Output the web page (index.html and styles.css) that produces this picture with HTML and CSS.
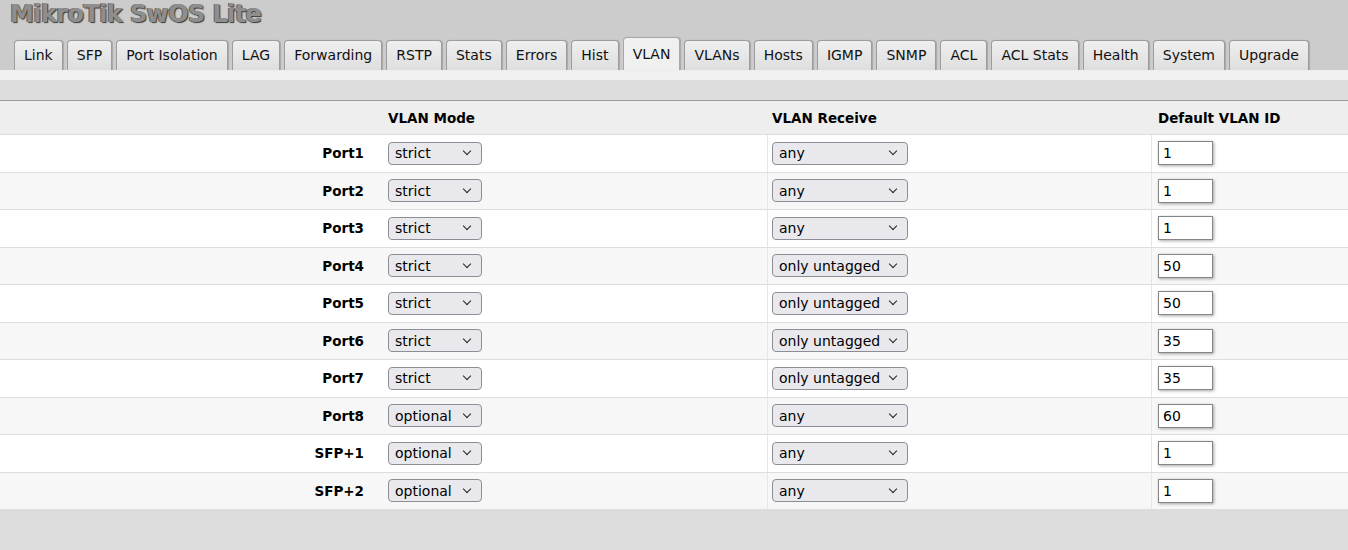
FILE: index.html
```html
<!DOCTYPE html>
<html>
<head>
<meta charset="utf-8">
<title>MikroTik SwOS Lite</title>
<link rel="stylesheet" href="styles.css">
</head>
<body>
<header class="title">MikroTik SwOS Lite</header>
<nav class="tabs">
  <a class="tab">Link</a>
  <a class="tab">SFP</a>
  <a class="tab">Port Isolation</a>
  <a class="tab">LAG</a>
  <a class="tab">Forwarding</a>
  <a class="tab">RSTP</a>
  <a class="tab">Stats</a>
  <a class="tab">Errors</a>
  <a class="tab">Hist</a>
  <a class="tab active">VLAN</a>
  <a class="tab">VLANs</a>
  <a class="tab">Hosts</a>
  <a class="tab">IGMP</a>
  <a class="tab">SNMP</a>
  <a class="tab">ACL</a>
  <a class="tab">ACL Stats</a>
  <a class="tab">Health</a>
  <a class="tab">System</a>
  <a class="tab">Upgrade</a>
</nav>
<div class="strip"></div>
<div class="bar"></div>
<main class="grid">
  <div class="row head">
    <div class="c1"></div>
    <div class="c2">VLAN Mode</div>
    <div class="c3">VLAN Receive</div>
    <div class="c4">Default VLAN ID</div>
  </div>
  <div class="row">
    <div class="c1 lbl">Port1</div>
    <div class="c2"><span class="sel mode"><select><option selected>strict</option><option>optional</option><option>enabled</option><option>disabled</option></select></span></div>
    <div class="c3"><span class="sel recv"><select><option selected>any</option><option>only tagged</option><option>only untagged</option></select></span></div>
    <div class="c4"><input class="vid" type="text" value="1"></div>
  </div>
  <div class="row">
    <div class="c1 lbl">Port2</div>
    <div class="c2"><span class="sel mode"><select><option selected>strict</option><option>optional</option></select></span></div>
    <div class="c3"><span class="sel recv"><select><option selected>any</option><option>only untagged</option></select></span></div>
    <div class="c4"><input class="vid" type="text" value="1"></div>
  </div>
  <div class="row">
    <div class="c1 lbl">Port3</div>
    <div class="c2"><span class="sel mode"><select><option selected>strict</option><option>optional</option></select></span></div>
    <div class="c3"><span class="sel recv"><select><option selected>any</option><option>only untagged</option></select></span></div>
    <div class="c4"><input class="vid" type="text" value="1"></div>
  </div>
  <div class="row">
    <div class="c1 lbl">Port4</div>
    <div class="c2"><span class="sel mode"><select><option selected>strict</option><option>optional</option></select></span></div>
    <div class="c3"><span class="sel recv"><select><option>any</option><option selected>only untagged</option></select></span></div>
    <div class="c4"><input class="vid" type="text" value="50"></div>
  </div>
  <div class="row">
    <div class="c1 lbl">Port5</div>
    <div class="c2"><span class="sel mode"><select><option selected>strict</option><option>optional</option></select></span></div>
    <div class="c3"><span class="sel recv"><select><option>any</option><option selected>only untagged</option></select></span></div>
    <div class="c4"><input class="vid" type="text" value="50"></div>
  </div>
  <div class="row">
    <div class="c1 lbl">Port6</div>
    <div class="c2"><span class="sel mode"><select><option selected>strict</option><option>optional</option></select></span></div>
    <div class="c3"><span class="sel recv"><select><option>any</option><option selected>only untagged</option></select></span></div>
    <div class="c4"><input class="vid" type="text" value="35"></div>
  </div>
  <div class="row">
    <div class="c1 lbl">Port7</div>
    <div class="c2"><span class="sel mode"><select><option selected>strict</option><option>optional</option></select></span></div>
    <div class="c3"><span class="sel recv"><select><option>any</option><option selected>only untagged</option></select></span></div>
    <div class="c4"><input class="vid" type="text" value="35"></div>
  </div>
  <div class="row">
    <div class="c1 lbl">Port8</div>
    <div class="c2"><span class="sel mode"><select><option>strict</option><option selected>optional</option></select></span></div>
    <div class="c3"><span class="sel recv"><select><option selected>any</option><option>only untagged</option></select></span></div>
    <div class="c4"><input class="vid" type="text" value="60"></div>
  </div>
  <div class="row">
    <div class="c1 lbl">SFP+1</div>
    <div class="c2"><span class="sel mode"><select><option>strict</option><option selected>optional</option></select></span></div>
    <div class="c3"><span class="sel recv"><select><option selected>any</option><option>only untagged</option></select></span></div>
    <div class="c4"><input class="vid" type="text" value="1"></div>
  </div>
  <div class="row">
    <div class="c1 lbl">SFP+2</div>
    <div class="c2"><span class="sel mode"><select><option>strict</option><option selected>optional</option></select></span></div>
    <div class="c3"><span class="sel recv"><select><option selected>any</option><option>only untagged</option></select></span></div>
    <div class="c4"><input class="vid" type="text" value="1"></div>
  </div>
</main>
</body>
</html>
```
FILE: styles.css
```css
html, body {
  margin: 0;
  padding: 0;
}
body {
  background: #dddddd;
  font-family: "DejaVu Sans", Verdana, sans-serif;
  font-size: 14px;
  color: #000;
}
.title {
  background: #cccccc;
  height: 37px;
  box-sizing: border-box;
  padding-left: 10px;
  font-weight: bold;
  font-size: 24px;
  line-height: 29px;
  letter-spacing: -0.6px;
  color: #8e8e8e;
  text-shadow: 1px 1px 1px #3a3a3a, -1px 0 0 #666;
}
.tabs {
  background: #cccccc;
  display: flex;
  align-items: flex-end;
  gap: 4.1px;
  height: 33px;
  padding-left: 14px;
}
.tab {
  display: block;
  box-sizing: border-box;
  height: 30px;
  line-height: 29px;
  padding: 0 9px;
  border: 1px solid #9c9c9c;
  border-bottom: none;
  border-radius: 4px 4px 0 0;
  background: linear-gradient(#efefef, #dedede);
  box-shadow: 1px 0 1px rgba(0, 0, 0, 0.18);
  color: #111;
  white-space: nowrap;
}
.tab.active {
  height: 33px;
  line-height: 32px;
  background: #f0f0f0;
  border-color: #a8a8a8;
}
.strip {
  height: 10px;
  background: #f0f0f0;
}
.bar {
  height: 20px;
  background: #dddddd;
  border-bottom: 1px solid #9a9a9a;
}
.row {
  display: grid;
  grid-template-columns: 383px 384px 384px 1fr;
  box-sizing: border-box;
  height: 37.5px;
  border-top: 1px solid #dddddd;
  background: #ffffff;
  align-items: center;
}
.row:nth-child(odd) {
  background: #f7f7f7;
}
.row.head {
  height: 33px;
  border-top: none;
  background: #eeeeee;
  font-weight: bold;
  font-size: 13.5px;
}
.row > div {
  height: 100%;
  display: flex;
  align-items: center;
  box-sizing: border-box;
}
.c1 {
  justify-content: flex-end;
  padding-right: 19px;
}
.c2 {
  padding-left: 5px;
}
.c3 {
  padding-left: 4px;
  border-left: 1px solid #e6e6e6;
}
.c4 {
  padding-left: 6px;
  border-left: 1px solid #e6e6e6;
}
.row.head .c3, .row.head .c4 {
  border-left-color: #eeeeee;
}
.lbl {
  font-weight: bold;
  font-size: 13.5px;
}
.sel {
  position: relative;
  display: inline-block;
}
.sel select {
  -webkit-appearance: none;
  appearance: none;
  box-sizing: border-box;
  height: 23px;
  margin: 0;
  padding: 0 0 0 6px;
  border: 1px solid #8d8d96;
  border-radius: 4px;
  background: #e9e9ed;
  font-family: "DejaVu Sans", Verdana, sans-serif;
  font-size: 14px;
  color: #000;
  outline: none;
}
.sel.mode select {
  width: 94px;
}
.sel.recv select {
  width: 136px;
}
.sel::after {
  content: "";
  position: absolute;
  right: 12px;
  top: 6.5px;
  width: 5px;
  height: 5px;
  border-right: 1.5px solid #222;
  border-bottom: 1.5px solid #222;
  transform: rotate(45deg);
  pointer-events: none;
}
.vid {
  box-sizing: border-box;
  width: 55px;
  height: 24px;
  margin: 0;
  padding: 0 0 0 4px;
  border: 1px solid #858585;
  background: #fff;
  box-shadow: 1px 1px 3px rgba(0, 0, 0, 0.35);
  font-family: "DejaVu Sans", Verdana, sans-serif;
  font-size: 14px;
  color: #000;
  outline: none;
}
```
